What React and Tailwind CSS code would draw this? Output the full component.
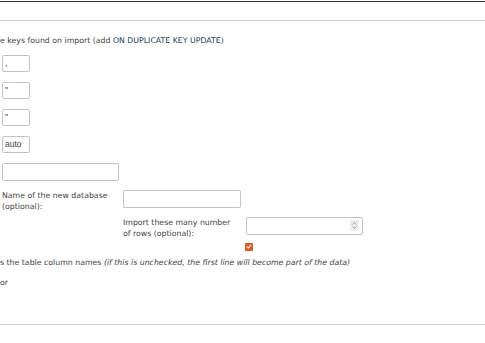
export default function App() {
  const small = "block w-[28px] h-[17px] border border-[#c4c4c4] rounded-[2px] bg-white px-[2px] text-[8.5px] leading-[15px] text-[#444] font-['Liberation_Sans',sans-serif]";
  return (
    <div className="w-[485px] h-[343px] bg-white overflow-hidden text-[#444] font-['DejaVu_Sans',sans-serif] text-[7.8px] leading-[11.5px]">
      <div className="h-px bg-[#333] mt-px" />
      <div className="h-px bg-[#c8c8c8] mt-[18px]" />
      <p className="mt-[14px] whitespace-nowrap">
        e keys found on import (add <span className="text-[#23405e]">ON DUPLICATE KEY UPDATE</span>)
      </p>
      <div className="flex flex-col gap-[10px] mt-[8px] pl-[2px]">
        <div className={small}>,</div>
        <div className={small}>"</div>
        <div className={small}>"</div>
        <div className={small}>auto</div>
        <div className="w-[117px] h-[18px] border border-[#c4c4c4] rounded-[2px] bg-white" />
      </div>
      <div className="grid grid-cols-[121px_123px_1fr] pl-[2px] mt-[9px]">
        <div>Name of the new database<br />(optional):</div>
        <div>
          <div className="w-[118px] h-[18px] border border-[#c4c4c4] rounded-[2px] bg-white" />
        </div>
        <div />
        <div />
        <div className="mt-[4px]">Import these many number<br />of rows (optional):</div>
        <div className="mt-[4px]">
          <div className="w-[117px] h-[18px] border border-[#c4c4c4] rounded-[2px] bg-white flex items-center justify-end pr-[3px]">
            <div className="w-[9px] h-[11px] bg-[#ececec] rounded-[1px] flex flex-col items-center justify-center gap-[1px]">
              <svg width="5" height="3" viewBox="0 0 5 3"><path d="M0.5 2.5 L2.5 0.5 L4.5 2.5" fill="none" stroke="#999" strokeWidth="0.8" /></svg>
              <svg width="5" height="3" viewBox="0 0 5 3"><path d="M0.5 0.5 L2.5 2.5 L4.5 0.5" fill="none" stroke="#999" strokeWidth="0.8" /></svg>
            </div>
          </div>
        </div>
        <div />
        <div />
        <div className="mt-[3px] -ml-[1px]">
          <div className="w-[8px] h-[8px] bg-[#e8561e] rounded-[1px] flex items-center justify-center">
            <svg width="6" height="5" viewBox="0 0 6 5"><path d="M0.8 2.6 L2.3 4 L5.2 1" fill="none" stroke="#fff" strokeWidth="1.2" /></svg>
          </div>
        </div>
      </div>
      <p className="mt-[6px] whitespace-nowrap">
        s the table column names <i>(if this is unchecked, the first line will become part of the data)</i>
      </p>
      <p className="mt-[8.5px] whitespace-nowrap">or</p>
      <div className="h-px bg-[#d0d0d0] mt-[36px]" />
    </div>
  );
}
